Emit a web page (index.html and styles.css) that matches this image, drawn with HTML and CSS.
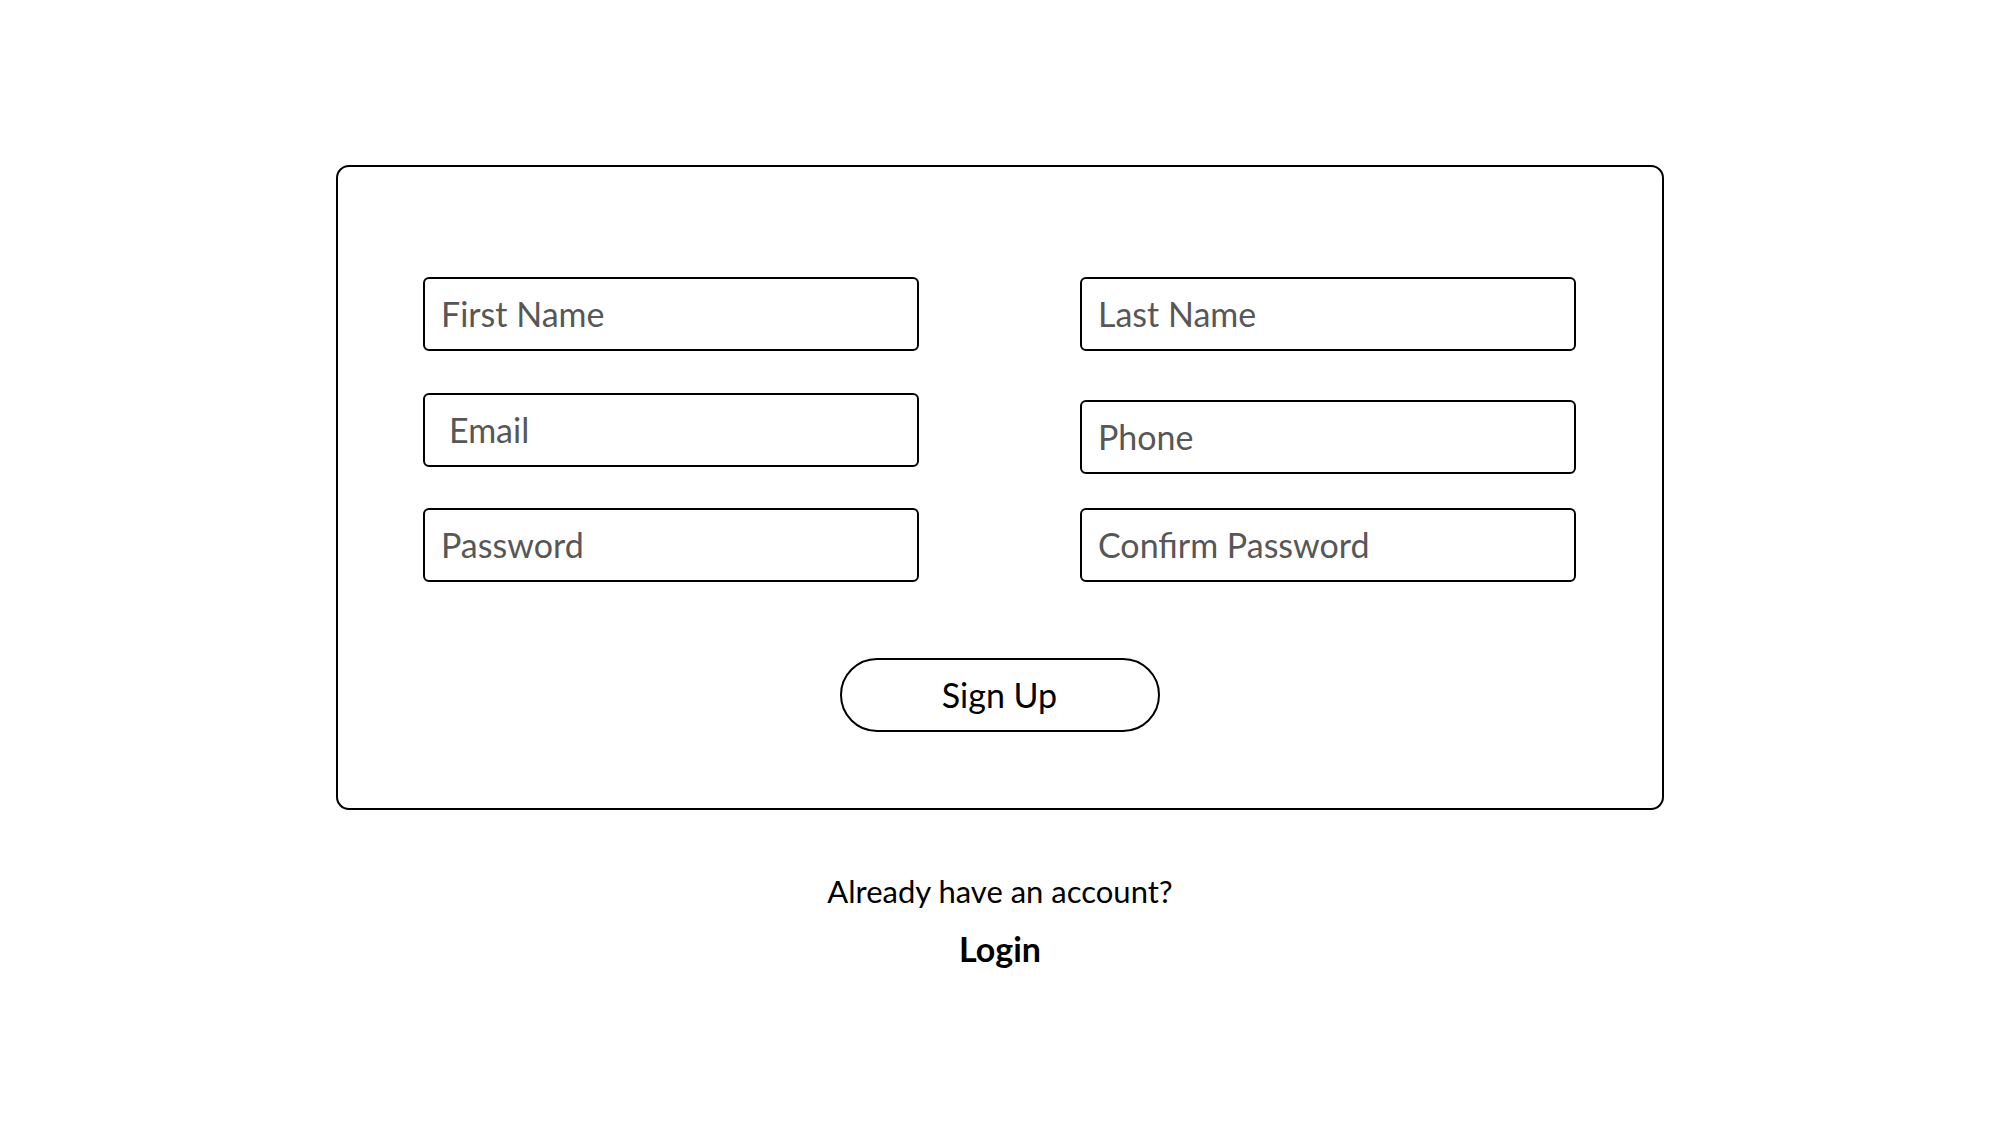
FILE: index.html
```html
<!DOCTYPE html>
<html lang="en">
<head>
<meta charset="utf-8">
<title>Sign Up</title>
<link rel="stylesheet" href="styles.css">
</head>
<body>
<main class="page">
  <section class="card">
    <div class="fields">
      <div class="col">
        <div class="field">First Name</div>
        <div class="field field-email">Email</div>
        <div class="field field-password">Password</div>
      </div>
      <div class="col">
        <div class="field">Last Name</div>
        <div class="field field-phone">Phone</div>
        <div class="field field-confirm">Confirm Password</div>
      </div>
    </div>
    <div class="actions">
      <button class="signup" type="button">Sign Up</button>
    </div>
  </section>
  <footer class="footer">
    <p class="already">Already have an account?</p>
    <p class="login">Login</p>
  </footer>
</main>
</body>
</html>
```

FILE: styles.css
```css
* { box-sizing: border-box; }

html, body {
  margin: 0;
  padding: 0;
  background: #ffffff;
}

body {
  font-family: Lato, "Open Sans", "Liberation Sans", sans-serif;
  color: #000;
}

.page {
  display: flex;
  flex-direction: column;
  align-items: center;
  padding-top: 165px;
}

.card {
  width: 1328px;
  height: 645px;
  border: 2px solid #000;
  border-radius: 13px;
  padding: 110px 86px 0 85px;
  display: flex;
  flex-direction: column;
}

.fields {
  display: flex;
  justify-content: space-between;
}

.col {
  width: 496px;
  display: flex;
  flex-direction: column;
  gap: 42px;
}

.field {
  height: 74px;
  border: 2px solid #000;
  border-radius: 6px;
  display: flex;
  align-items: center;
  padding-left: 16px;
  padding-bottom: 2px;
  font-size: 34px;
  color: #575757;
  white-space: nowrap;
}

.field-email { padding-left: 24px; }
.field-password { margin-top: -1px; }
.field-phone { margin-top: 7px; }
.field-confirm { margin-top: -8px; }

.actions {
  display: flex;
  justify-content: center;
  margin-top: 76px;
}

.signup {
  width: 320px;
  height: 74px;
  border: 2px solid #000;
  border-radius: 37px;
  background: #fff;
  font-family: Lato, "Open Sans", "Liberation Sans", sans-serif;
  font-size: 34px;
  color: #000;
  padding: 0 0 2px;
  display: flex;
  align-items: center;
  justify-content: center;
}

.footer {
  margin-top: 61px;
  text-align: center;
}

.already {
  margin: 0;
  font-size: 31px;
  line-height: 40px;
}

.login {
  margin: 18px 0 0;
  font-size: 34px;
  font-weight: 700;
  line-height: 40px;
}
```
